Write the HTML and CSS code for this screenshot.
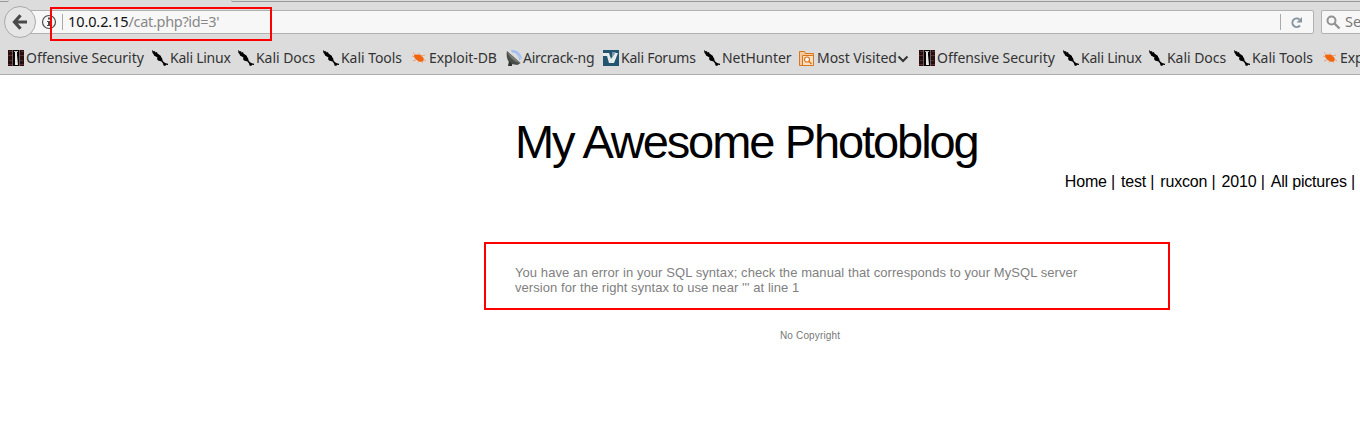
FILE: index.html
```html
<!DOCTYPE html>
<html lang="en">
<head>
<meta charset="utf-8">
<title>My Awesome Photoblog</title>
<link rel="stylesheet" href="styles.css">
</head>
<body>
<svg class="defs" width="0" height="0" aria-hidden="true">
  <symbol id="offsec" viewBox="0 0 16 16">
    <path fill="#260f10" d="M0 0h16v16H0z"/>
    <path fill="#5d2b2c" d="M1 1h3v1H1zM0 5h4v1H0zM1 10h3v1H1zM0 14h4v1H0zM13 1h3v1h-3zM12 5h4v1h-4zM12 10h3v1h-3zM12 14h4v1h-4z"/>
    <path fill="#6e5a59" d="M4 0h1v16H4zM11 0h1v16h-1z"/>
    <path fill="#050505" d="M5 0h6v16H5z"/>
    <path fill="#bbb" d="M6 1h4v1H6z"/>
    <path fill="#e8e8e6" d="M7 2h2v3l1 10H7z"/>
  </symbol>
  <symbol id="kali" viewBox="0 0 16 16">
    <path d="M0 0l2 1.500L3 1l.5 1.500L5 2l.5 1.500L9 6l0 1 1 1 .8 3 2.200 2 3 .8V15l-2-.2-.8 1.200-1.700-.5L11 13.500 9.500 11.500 6 10.500 5 9 5.500 7.500 2 5.500 1.500 4 .5 3z"/>
  </symbol>
  <symbol id="exploit" viewBox="0 0 16 16">
    <path fill="#f2650f" d="M3 5l3-.5 4 .5 2.500 3 .5 2-2 2-3-.5-3-2L3 7z"/>
    <path fill="none" stroke="#f4935c" stroke-width=".8" d="M5 5L2 2.500M8 5V3M10 6l4-1M4 7L1 6M5 10l-3 1M8 11l-1 1.500M10 11l2 2M12 9l3 2"/>
  </symbol>
  <symbol id="aircrack" viewBox="0 0 16 16">
    <path fill="none" stroke="#9dbdf3" stroke-width="1.300" d="M6 2c4-.5 7 3 8 8M5 .8c6-.5 9 3 10.500 8"/>
    <path fill="#494d48" d="M1 1l13.500 12-3 2L5 14C1 11 0 6 1 1z"/>
    <path fill="#777b73" d="M1 1l13.500 12C8 12 3 7 1 1z"/>
    <path fill="#30342f" d="M3 11l3 3v2H2z"/>
  </symbol>
  <symbol id="forums" viewBox="0 0 16 16">
    <path fill="#245570" d="M0 0h16v16H0z"/>
    <path fill="#e7eced" d="M0 3h6l2 6 3-6h4l-4 10H6L4 6H0z"/>
    <path fill="#789aac" d="M9 2h4l-4 6z"/>
  </symbol>
  <symbol id="visited" viewBox="0 0 16 16">
    <path fill="#f5c99c" stroke="#d9751b" d="M.5 1.500h5l1 2h8v12H.5z"/>
    <path fill="#f9dfc3" stroke="#d9751b" d="M3.500 5.500h11v10h-11z"/>
    <circle cx="8" cy="9.500" r="2.500" fill="#fff" stroke="#d9751b" stroke-width="1.200"/>
    <path stroke="#d9751b" stroke-width="1.400" d="M10 11.500l2.500 2.500"/>
  </symbol>
</svg>
<header class="chrome">
  <div class="tabs"><span class="tab-left"></span><span class="tab-right"></span></div>
  <div class="toolbar">
    <button class="back" aria-label="Back"><svg width="16" height="16" viewBox="0 0 16 16"><path fill="none" stroke="#4a4a4a" stroke-width="3.200" d="M8.500 1.300L2.500 8l6 6.700M3 8h12"/></svg></button>
    <div class="address">
      <svg class="info" width="16" height="16" viewBox="0 0 16 16"><circle cx="8" cy="8" r="6.500" fill="none" stroke="#4d4d4d" stroke-width="1.200"/><path fill="#4d4d4d" d="M7 3.500h2v2H7zM6 7h3v4h1v1H6v-1h1V8H6z"/></svg>
      <span class="divider"></span>
      <span class="url"><b>10.0.2.15</b>/cat.php?id=3'</span>
      <span class="divider reload-line"></span>
      <svg class="reload" width="13" height="13" viewBox="0 0 13 13"><path fill="none" stroke="#8795a1" stroke-width="2" d="M9.500 3.400A4.300 4.300 0 1 0 10 9.500"/><path fill="#8795a1" d="M12 1v5.500H6.500z"/></svg>
    </div>
    <div class="search"><svg width="15" height="15" viewBox="0 0 15 15"><circle cx="5.500" cy="5.500" r="4" fill="none" stroke="#929292" stroke-width="2"/><path stroke="#929292" stroke-width="2.400" d="M8.500 8.500l5 5"/></svg><span>Search</span></div>
    <div class="mark mark-url"></div>
  </div>
  <nav class="bookmarks">
    <a class="w144"><svg><use href="#offsec"/></svg><span>Offensive Security</span></a>
    <a class="w86"><svg><use href="#kali"/></svg><span class="tight">Kali Linux</span></a>
    <a class="w85"><svg><use href="#kali"/></svg><span>Kali Docs</span></a>
    <a class="w88"><svg><use href="#kali"/></svg><span>Kali Tools</span></a>
    <a class="w95"><svg><use href="#exploit"/></svg><span>Exploit-DB</span></a>
    <a class="w97 near"><svg><use href="#aircrack"/></svg><span class="tight">Aircrack-ng</span></a>
    <a class="w101"><svg><use href="#forums"/></svg><span class="tight">Kali Forums</span></a>
    <a class="w95"><svg><use href="#kali"/></svg><span>NetHunter</span></a>
    <a class="w120"><svg><use href="#visited"/></svg><span>Most Visited</span><svg class="chevron" viewBox="0 0 12 8"><path fill="none" stroke="#333" stroke-width="2" d="M1.500 1.500L6 6l4.500-4.500"/></svg></a>
    <a class="w144"><svg><use href="#offsec"/></svg><span>Offensive Security</span></a>
    <a class="w86"><svg><use href="#kali"/></svg><span class="tight">Kali Linux</span></a>
    <a class="w85"><svg><use href="#kali"/></svg><span>Kali Docs</span></a>
    <a class="w88"><svg><use href="#kali"/></svg><span>Kali Tools</span></a>
    <a class="w95"><svg><use href="#exploit"/></svg><span>Exploit-DB</span></a>
  </nav>
</header>
<main class="page">
  <h1>My Awesome Photoblog</h1>
  <nav class="menu"><a>Home |</a><a>test |</a><a>ruxcon |</a><a>2010 |</a><a>All pictures |</a></nav>
  <section class="error">You have an error in your SQL syntax; check the manual that corresponds to your MySQL server<br><span class="line-end">version for the right syntax to use near ''' at line 1</span></section>
  <footer>No Copyright</footer>
</main>
</body>
</html>
```

FILE: styles.css
```css
* { box-sizing: border-box; }
body { margin: 0; background: #fff; overflow: hidden; height: 443px; font-family: "Liberation Sans", Arial, sans-serif; }
.defs { display: none; }
.chrome { height: 75px; background: #dcdcdc; border-bottom: 1px solid #adadad; font-family: "Noto Sans", "Open Sans", sans-serif; overflow: hidden; }
.tabs { height: 3px; display: flex; justify-content: space-between; }
.tab-left { width: 9px; height: 2px; border-bottom: 1px solid #999; border-radius: 0 0 5px 0; }
.tab-right { width: 1129px; height: 2px; border-bottom: 1px solid #999; border-radius: 0 0 0 5px; }
.toolbar { position: relative; height: 39px; display: flex; align-items: flex-start; padding: 7px 0 0 4px; }
.back { position: relative; z-index: 1; width: 32px; height: 32px; margin-top: -4px; padding: 0; border: 1px solid #aaa; border-radius: 50%; background: #e6e6e6; display: flex; align-items: center; justify-content: center; flex: none; }
.address { width: 1294px; height: 24px; margin-left: -16px; flex: none; display: flex; align-items: center; border: 1px solid #b1b1b1; border-radius: 2px; background: #f7f7f7; padding-left: 20px; }
.info { flex: none; }
.divider { width: 1px; height: 16px; background: #aaa; margin-left: 5px; flex: none; }
.url { margin-left: 5px; font-size: 14.5px; line-height: 20px; padding-bottom: 2px; color: #888; white-space: nowrap; width: 151px; letter-spacing: -0.32px; }
.url b { color: #111; font-weight: 400; letter-spacing: -0.1px; }
.reload-line { margin-left: auto; }
.reload { margin: 0 10px 0 9px; }
.search { flex: none; width: 100px; height: 24px; margin-left: 7px; padding-left: 4px; display: flex; align-items: center; gap: 4px; border: 1px solid #b1b1b1; border-radius: 2px; background: #f7f7f7; color: #777; font-size: 14.5px; line-height: 20px; }
.search span { padding-bottom: 2px; }
.mark { border: 2px solid #f00; }
.mark-url { position: absolute; z-index: 2; left: 50px; top: 4px; width: 222px; height: 34px; }
.bookmarks { height: 32px; display: flex; align-items: center; padding-left: 8px; font-size: 14px; line-height: 18px; letter-spacing: -0.05px; color: #333; overflow: hidden; }
.bookmarks a { display: flex; align-items: center; flex: none; white-space: nowrap; }
.bookmarks .tight { letter-spacing: -0.25px; }
.bookmarks svg { width: 16px; height: 16px; margin-right: 2px; flex: none; }
.bookmarks .near svg { margin-right: 1px; }
.bookmarks .chevron { width: 12px; height: 8px; margin: 1px 0 0; }
.w144 { width: 144px; }
.w86 { width: 86px; }
.w85 { width: 85px; }
.w88 { width: 88px; }
.w95 { width: 95px; }
.w97 { width: 97px; }
.w101 { width: 101px; }
.w120 { width: 120px; }
.page { padding-top: 39px; }
h1 { margin: 0 0 0 515px; height: 58px; font-size: 47px; line-height: 55px; font-weight: 400; letter-spacing: -2.1px; word-spacing: 0.6px; color: #000; white-space: nowrap; }
.menu { height: 20px; display: flex; justify-content: flex-end; gap: 6px; padding-right: 5px; font-size: 16px; line-height: 20px; letter-spacing: -0.18px; white-space: nowrap; }
.error { margin: 50px 0 0 484px; width: 686px; height: 68px; border: 2px solid #f00; padding: 21px 0 0 29px; font-size: 13px; line-height: 15px; letter-spacing: 0.08px; color: #808080; white-space: nowrap; }
.line-end { letter-spacing: 0.055px; }
footer { margin: 19px 0 0 780px; font-size: 10px; line-height: 14px; letter-spacing: 0.15px; color: #777; }
```
